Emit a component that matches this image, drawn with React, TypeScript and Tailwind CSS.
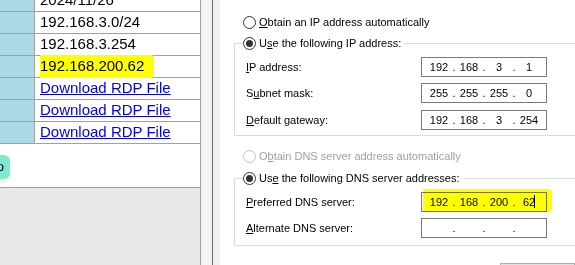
import React from "react";

type Row = { text: string; mark?: boolean; link?: boolean };

const rows: Row[] = [
  { text: "2024/11/26" },
  { text: "192.168.3.0/24" },
  { text: "192.168.3.254" },
  { text: "192.168.200.62", mark: true },
  { text: "Download RDP File", link: true },
  { text: "Download RDP File", link: true },
  { text: "Download RDP File", link: true },
];

function Radio({
  checked,
  disabled,
  children,
}: {
  checked?: boolean;
  disabled?: boolean;
  children: React.ReactNode;
}) {
  return (
    <div className="flex items-center h-[16px] whitespace-nowrap">
      <span
        className={`w-[13px] h-[13px] shrink-0 rounded-full border bg-white flex items-center justify-center ${
          disabled ? "border-[#c4c4c4]" : "border-[#333333]"
        }`}
      >
        {checked && <span className="w-[7px] h-[7px] rounded-full bg-[#333333]" />}
      </span>
      <span className={`ml-[3px] ${disabled ? "text-[#a0a0a0]" : "text-black"}`}>{children}</span>
    </div>
  );
}

// Windows style IP control: 4 centred fields split by dots
function IpBox({ parts, caret }: { parts: string[]; caret?: boolean }) {
  return (
    <div className="w-[126px] h-[20px] border border-[#7a7a7a] bg-white flex items-center pl-[4px]">
      {parts.map((p, i) => (
        <React.Fragment key={i}>
          <span className="w-[26px] text-center relative">
            {p}
            {caret && i === 3 && (
              <span className="absolute top-[1px] right-[7px] w-px h-[13px] bg-black" />
            )}
          </span>
          {i < 3 && <span className="w-[4px] text-center">.</span>}
        </React.Fragment>
      ))}
    </div>
  );
}

function Field({ label, parts, mt, marked }: { label: React.ReactNode; parts: string[]; mt: string; marked?: boolean }) {
  return (
    <div className={`flex items-center h-[20px] ${mt}`}>
      <span className="w-[175px] shrink-0">{label}</span>
      <div className="relative">
        <IpBox parts={parts} caret={marked} />
        {marked && (
          <span className="absolute left-[2px] top-[-3px] w-[129px] h-[23px] bg-[#ffff00] mix-blend-multiply rounded-r-[4px] rounded-l-[2px]" />
        )}
      </div>
    </div>
  );
}

export default function App() {
  return (
    <div className="w-[575px] h-[265px] flex overflow-hidden bg-white">
      {/* left page: table */}
      <div className="w-[201px] shrink-0 flex flex-col border-r border-[#a0a0a0] overflow-hidden font-['Liberation_Sans',Arial,sans-serif]">
        <div className="mt-[-10px]">
          {rows.map((r, i) => (
            <div key={i} className="flex h-[22px] border-b border-[#a0a0a0]">
              <div className="w-[35px] shrink-0 bg-[#add8e6] border-r border-[#a0a0a0]" />
              <div className="flex-1 flex items-center pl-[5px] text-[15px] text-black whitespace-nowrap">
                {r.link ? (
                  <span className="text-[#0000ee] underline">{r.text}</span>
                ) : r.mark ? (
                  <span className="bg-[#ffff00] pr-[10px] rounded-r-[3px]">{r.text}</span>
                ) : (
                  <span>{r.text}</span>
                )}
              </div>
            </div>
          ))}
        </div>
        <div className="h-[44px] border-b border-[#a0a0a0] bg-white">
          <button className="mt-[11px] ml-[-26px] w-[36px] h-[24px] rounded-[6px] bg-[#7fe8d0] shadow-md text-[13px] text-black text-right pr-[6px]">
            Go
          </button>
        </div>
        <div className="flex-1 bg-[#e8e8e8]" />
      </div>

      {/* window edge */}
      <div className="w-[11px] shrink-0 bg-[#f3f3f3]" />

      {/* IPv4 properties dialog */}
      <div className="flex-1 flex border-l border-[#6e6e6e] bg-[#f0f0f0] pl-[7px] overflow-hidden">
        <div className="flex-1 bg-white pl-[14px] pt-[14px] flex flex-col overflow-hidden text-[11px] text-black font-['Liberation_Sans',Arial,sans-serif]">
          <div className="ml-[9px]">
            <Radio>
              <u>O</u>btain an IP address automatically
            </Radio>
          </div>

          <fieldset className="mt-[5px] w-[360px] shrink-0 border border-[#dcdcdc] pl-[11px] pt-[6px] pb-[5px]">
            <legend className="ml-[-3px] pr-[3px]">
              <Radio checked>
                U<u>s</u>e the following IP address:
              </Radio>
            </legend>
            <Field label={<><u>I</u>P address:</>} parts={["192", "168", "3", "1"]} mt="" />
            <Field label={<>S<u>u</u>bnet mask:</>} parts={["255", "255", "255", "0"]} mt="mt-[6px]" />
            <Field label={<><u>D</u>efault gateway:</>} parts={["192", "168", "3", "254"]} mt="mt-[7px]" />
          </fieldset>

          <div className="ml-[9px] mt-[12px]">
            <Radio disabled>
              O<u>b</u>tain DNS server address automatically
            </Radio>
          </div>

          <fieldset className="mt-[6px] w-[360px] shrink-0 border border-[#dcdcdc] pl-[11px] pt-[6px] pb-[7px]">
            <legend className="ml-[-3px] pr-[3px]">
              <Radio checked>
                Us<u>e</u> the following DNS server addresses:
              </Radio>
            </legend>
            <Field label={<><u>P</u>referred DNS server:</>} parts={["192", "168", "200", "62"]} mt="" marked />
            <Field label={<><u>A</u>lternate DNS server:</>} parts={["", "", "", ""]} mt="mt-[6px]" />
          </fieldset>

          <div className="mt-[17px] flex items-start shrink-0">
            <div className="ml-[13px] w-[255px] flex items-center gap-[4px]">
              <span className="w-[13px] h-[13px] border border-[#333333] bg-white" />
              <span>
                Va<u>l</u>idate settings upon exit
              </span>
            </div>
            <button className="w-[75px] h-[23px] border border-[#adadad] bg-[#e1e1e1]">
              Ad<u>v</u>anced...
            </button>
          </div>
        </div>
      </div>
    </div>
  );
}
